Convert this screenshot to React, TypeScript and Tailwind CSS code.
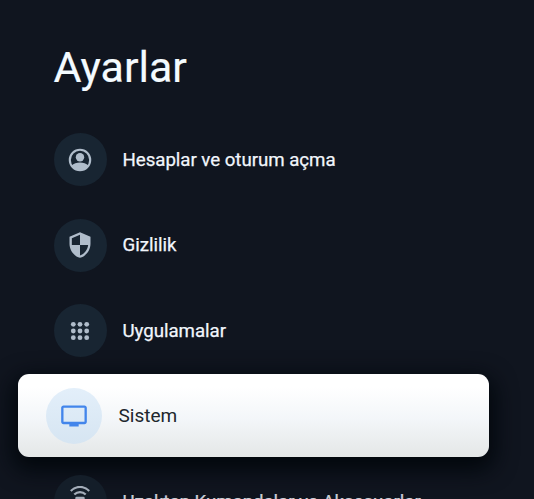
import type { ReactNode } from "react";

function AccountIcon() {
  return (
    <svg viewBox="0 0 28 28" className="size-7">
      <circle cx="14" cy="14" r="10.2" fill="none" stroke="currentColor" strokeWidth="2.1" />
      <circle cx="14" cy="11.2" r="4.2" fill="currentColor" />
      <path d="M5.6 19.6C7.6 17.4 10.8 16.5 14 16.5s6.4.9 8.4 3.1A10.1 10.1 0 0 1 14 24.4a10.1 10.1 0 0 1-8.4-4.8z" fill="currentColor" />
    </svg>
  );
}

function ShieldIcon() {
  return (
    <svg viewBox="0 0 24 24" className="size-7" fill="currentColor">
      <path d="M12 1L3 5v6c0 5.55 3.84 10.74 9 12 5.16-1.26 9-6.45 9-12V5l-9-4zm0 10.99h7c-.53 4.12-3.28 7.79-7 8.94V12H5V6.3l7-3.11v8.8z" />
    </svg>
  );
}

function AppsIcon() {
  const steps = [7.3, 14, 20.7];
  return (
    <svg viewBox="0 0 28 28" className="size-7" fill="currentColor">
      {steps.map((y) => steps.map((x) => <circle key={`${x}-${y}`} cx={x} cy={y} r="2.4" />))}
    </svg>
  );
}

function TvIcon() {
  return (
    <svg viewBox="0 0 24 24" className="size-7" fill="currentColor">
      <path d="M21 3H3c-1.1 0-2 .9-2 2v12c0 1.1.9 2 2 2h5v2h8v-2h5c1.1 0 2-.9 2-2V5c0-1.1-.9-2-2-2zm0 14H3V5h18v12z" />
    </svg>
  );
}

function RemoteIcon() {
  return (
    <svg viewBox="0 0 32 32" className="size-8" fill="none" stroke="currentColor" strokeWidth="2.2">
      <path d="M6.8 4.9C12-.4 20-.4 25.200 4.900" />
      <path d="M10.300 8.500c3.200-3.300 8.200-3.300 11.400 0" />
      <rect x="11.300" y="10.800" width="9.400" height="19" rx="1.300" fill="currentColor" stroke="none" />
    </svg>
  );
}

function Row({ icon, label, shaded = false }: { icon: ReactNode; label: string; shaded?: boolean }) {
  return (
    <li className={`flex h-[53px] items-center gap-4 ${shaded ? "text-[#c8ced6]" : "text-[#f2f6fc]"}`}>
      <span
        className={`flex size-[53px] shrink-0 items-center justify-center rounded-full ${
          shaded ? "bg-[#141e29] text-[#a4adb9]" : "bg-[#182532] text-[#b0bdcb]"
        }`}
      >
        {icon}
      </span>
      <span className="whitespace-nowrap text-[18.7px] leading-6 tracking-[-0.04px] [-webkit-text-stroke:0.25px_currentColor]">
        {label}
      </span>
    </li>
  );
}

export default function App() {
  return (
    <main className="h-[499px] w-[534px] overflow-hidden bg-[#10151f] font-['Roboto',sans-serif]">
      <h1 className="ml-[53.500px] pt-[41px] text-[43px] leading-[52px] text-[#f4fbff] [-webkit-text-stroke:0.2px_#f4fbff]">
        Ayarlar
      </h1>
      <ul className="ml-[53.500px] mt-[40px] flex flex-col">
        <Row icon={<AccountIcon />} label="Hesaplar ve oturum açma" />
        <li className="h-[32.500px]" />
        <Row icon={<ShieldIcon />} label="Gizlilik" />
        <li className="h-[32.500px]" />
        <Row icon={<AppsIcon />} label="Uygulamalar" />
        <li className="-ml-[35.500px] mt-[17px] flex h-[83px] w-[470.500px] items-center gap-[17px] rounded-[11px] bg-linear-to-b from-white from-15% via-[#f3f6f9] via-55% to-[#e4e7e7] pl-[27.500px] text-[#20262d] shadow-[0_8px_22px_5px_#02070c]">
          <span className="flex size-[56px] items-center justify-center rounded-full bg-linear-to-b from-[#e3effa] to-[#d6e5f2] text-[#4285eb]">
            <TvIcon />
          </span>
          <span className="text-[19px] leading-6">Sistem</span>
        </li>
        <li className="h-[18px]" />
        <Row icon={<RemoteIcon />} label="Uzaktan Kumandalar ve Aksesuarlar" shaded />
      </ul>
    </main>
  );
}
